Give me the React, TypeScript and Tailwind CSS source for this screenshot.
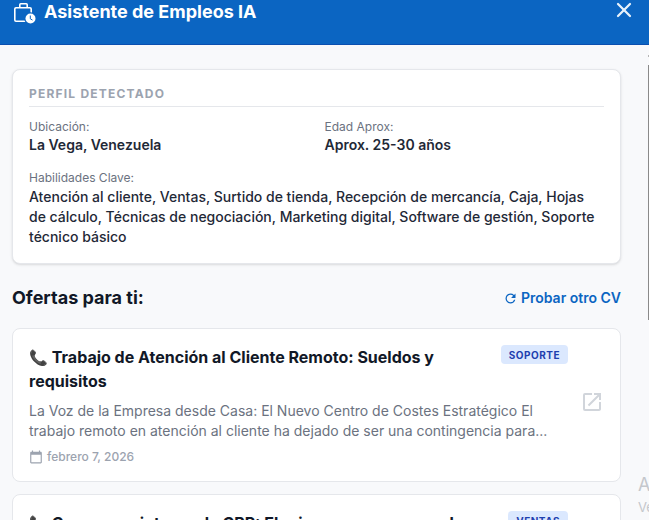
import { X } from "lucide-react";
import { MdCalendarToday, MdOpenInNew, MdRefresh } from "react-icons/md";

function JobIcon() {
	return (
		<svg viewBox="0 0 24 24" className="w-[24px] h-[24px]" fill="none">
			<rect x="1.800" y="7.800" width="16.400" height="13.400" rx="1.200" stroke="#ffffff" strokeWidth="1.600" />
			<path d="M6.800 7.800V4.800a1 1 0 0 1 1-1h5.400a1 1 0 0 1 1 1v3" stroke="#ffffff" strokeWidth="1.600" />
			<circle cx="17.500" cy="18.500" r="6.200" fill="#0b65c2" />
			<circle cx="17.500" cy="18.500" r="5" fill="#ffffff" />
			<path d="M17.300 15.500v3.300l2.200 1.300" stroke="#0b65c2" strokeWidth="1" />
		</svg>
	);
}

function Badge({ label }: { label: string }) {
	return (
		<span className="bg-[#dbe8fe] text-[#1e40af] text-[10px] leading-[12px] font-bold tracking-[0.5px] rounded-[4px] px-[8px] py-[3.5px] shrink-0">
			{label}
		</span>
	);
}

export default function App() {
	return (
		<div className="h-[520px] w-[649px] overflow-hidden bg-[#f8f9fb] font-['Inter','Liberation_Sans',sans-serif] relative">
			<header className="h-[45px] bg-[#0b65c2] border-b border-[#0a4fb0] flex items-start justify-between pl-[13px] pr-[13px]">
				<div className="flex items-center gap-[7px]">
					<JobIcon />
					<h1 className="text-white text-[18px] leading-[24px] font-bold">
						Asistente de Empleos IA
					</h1>
				</div>
				<X className="text-[#e8f2fb] -mt-[2px]" size={24} strokeWidth={2.25} />
			</header>

			<main className="px-[12px] pt-[24px]">
				<section className="w-[609px] bg-white border border-[#e5e7eb] rounded-[8px] p-[16px] shadow-sm">
					<h2 className="text-[12px] leading-[16px] font-bold tracking-[1.2px] text-[#9ca3af] pb-[4px] border-b border-[#e5e7eb]">
						PERFIL DETECTADO
					</h2>
					<div className="grid grid-cols-2 gap-[16px] mt-[12px]">
						<div>
							<p className="text-[12px] leading-[16px] text-[#6b7280]">Ubicación:</p>
							<p className="text-[14px] leading-[20px] font-semibold text-[#1f2937]">
								La Vega, Venezuela
							</p>
						</div>
						<div>
							<p className="text-[12px] leading-[16px] text-[#6b7280]">Edad Aprox:</p>
							<p className="text-[14px] leading-[20px] font-semibold text-[#1f2937]">
								Aprox. 25-30 años
							</p>
						</div>
					</div>
					<div className="mt-[15px]">
						<p className="text-[12px] leading-[16px] text-[#6b7280]">Habilidades Clave:</p>
						<p className="text-[14px] leading-[20px] font-medium text-[#1f2937] mt-[1px]">
							Atención al cliente, Ventas, Surtido de tienda, Recepción de mercancía, Caja, Hojas
							de cálculo, Técnicas de negociación, Marketing digital, Software de gestión, Soporte
							técnico básico
						</p>
					</div>
				</section>

				<div className="w-[609px] flex items-center justify-between mt-[22px]">
					<h2 className="text-[18px] leading-[24px] font-bold text-[#111827]">Ofertas para ti:</h2>
					<button className="flex items-center gap-[3px] text-[#0b65c2] text-[14px] leading-[16px] font-semibold">
						<MdRefresh size={15} />
						Probar otro CV
					</button>
				</div>

				<article className="w-[609px] h-[154px] mt-[18px] bg-white border border-[#e5e7eb] rounded-[8px] pl-[16px] pr-[16px] pt-[16px] flex items-center gap-[12px]">
					<div className="w-[539px] self-start">
						<div className="flex items-start justify-between gap-[12px]">
							<h3 className="flex-1 text-[16px] leading-[24px] font-bold text-[#111827]">
								<span className="font-['DejaVu_Sans'] text-[15px] leading-[16px]">📞</span> Trabajo de Atención al Cliente Remoto: Sueldos y requisitos
							</h3>
							<Badge label="SOPORTE" />
						</div>
						<p className="mt-[8px] text-[14px] leading-[20px] text-[#6b7280]">
							La Voz de la Empresa desde Casa: El Nuevo Centro de Costes Estratégico El trabajo
							remoto en atención al cliente ha dejado de ser una contingencia para...
						</p>
						<div className="flex items-center gap-[4px] mt-[8px] text-[#9ca3af] text-[12px] leading-[16px] font-medium">
							<MdCalendarToday size={14} />
							febrero 7, 2026
						</div>
					</div>
					<MdOpenInNew className="text-[#d1d5db] mb-[23px]" size={24} />
				</article>

				<article className="w-[609px] h-[100px] mt-[12px] bg-white border border-[#e5e7eb] rounded-[8px] pl-[16px] pr-[16px] pt-[16px]">
					<div className="w-[539px] flex items-start justify-between gap-[12px]">
						<h3 className="flex-1 text-[16px] leading-[24px] font-bold text-[#111827]">
							<span className="font-['DejaVu_Sans'] text-[15px] leading-[16px]">📞</span> Compras e interna de CRP: El crimen que se esconde
						</h3>
						<Badge label="VENTAS" />
					</div>
				</article>
			</main>

			<div className="absolute left-[638px] top-[475px] text-[#c4c7cc]">
				<div className="text-[18px] leading-[20px]">A</div>
				<div className="text-[13px] leading-[16px] mt-[4px]">Ve</div>
			</div>
			<div className="absolute right-0 top-[55px] w-[1px] h-[2px] bg-[#b5b5b5]" />
			<div className="absolute right-0 top-[65px] w-[1px] h-[255px] bg-[#8a8a8a]" />
		</div>
	);
}
